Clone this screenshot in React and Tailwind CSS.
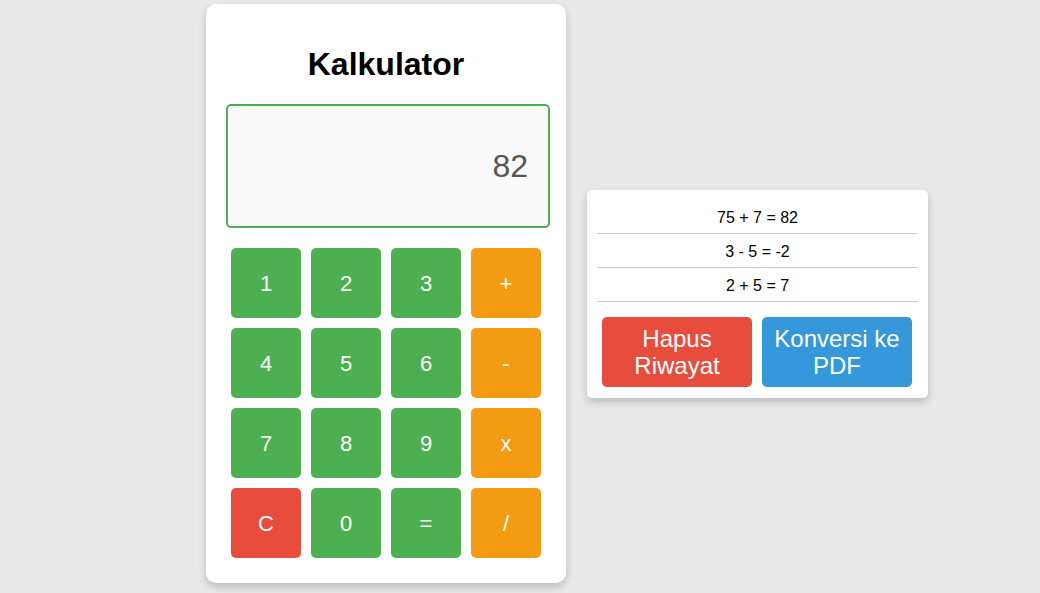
const keys = [
  ['1', 'num'], ['2', 'num'], ['3', 'num'], ['+', 'op'],
  ['4', 'num'], ['5', 'num'], ['6', 'num'], ['-', 'op'],
  ['7', 'num'], ['8', 'num'], ['9', 'num'], ['x', 'op'],
  ['C', 'clear'], ['0', 'num'], ['=', 'num'], ['/', 'op'],
];

const keyColor = {
  num: 'bg-[#4caf50]',
  op: 'bg-[#f39c12]',
  clear: 'bg-[#e74c3c]',
};

const history = ['75 + 7 = 82', '3 - 5 = -2', '2 + 5 = 7'];

export default function App() {
  return (
    <div
      className="h-[593px] bg-[#e9e9e9] overflow-hidden"
      style={{ fontFamily: '"Liberation Sans", Arial, sans-serif' }}
    >
      <div className="h-[587px] flex items-center pl-[206px] gap-[21px]">
        {/* calculator */}
        <div className="w-[360px] bg-white rounded-[10px] p-[20px] shadow-[0_4px_8px_rgba(0,0,0,0.2)]">
          <h1 className="text-[32px] font-bold text-black text-center leading-[37px] mt-[21.5px] mb-[21.5px]">
            Kalkulator
          </h1>
          <div className="w-[324px] h-[124px] border-2 border-[#4caf50] rounded-[5px] bg-[#f9f9f9] flex items-center justify-end pr-[20px] text-[32px] text-[#555]">
            82
          </div>
          <div className="grid grid-cols-4 mt-[15px]">
            {keys.map(([label, kind]) => (
              <button
                key={label}
                className={`m-[5px] h-[70px] w-[70px] rounded-[5px] text-white text-[22px] flex items-center justify-center ${keyColor[kind]}`}
              >
                {label}
              </button>
            ))}
          </div>
        </div>

        {/* history */}
        <div className="w-[341px] bg-white rounded-[5px] px-[10px] pt-[10px] pb-[6px] shadow-[0_4px_8px_rgba(0,0,0,0.2)]">
          <ul>
            {history.map((h) => (
              <li key={h} className="text-[16px] leading-[17px] pt-[9px] pb-[7px] text-center text-black border-b border-[#ccc]">
                {h}
              </li>
            ))}
          </ul>
          <div className="flex mt-[10px]">
            <button className="m-[5px] w-[150px] h-[70px] rounded-[5px] bg-[#e74c3c] text-white text-[24px] leading-[27px]">
              Hapus Riwayat
            </button>
            <button className="m-[5px] w-[150px] h-[70px] rounded-[5px] bg-[#3498db] text-white text-[24px] leading-[27px]">
              Konversi ke PDF
            </button>
          </div>
        </div>
      </div>
    </div>
  );
}
